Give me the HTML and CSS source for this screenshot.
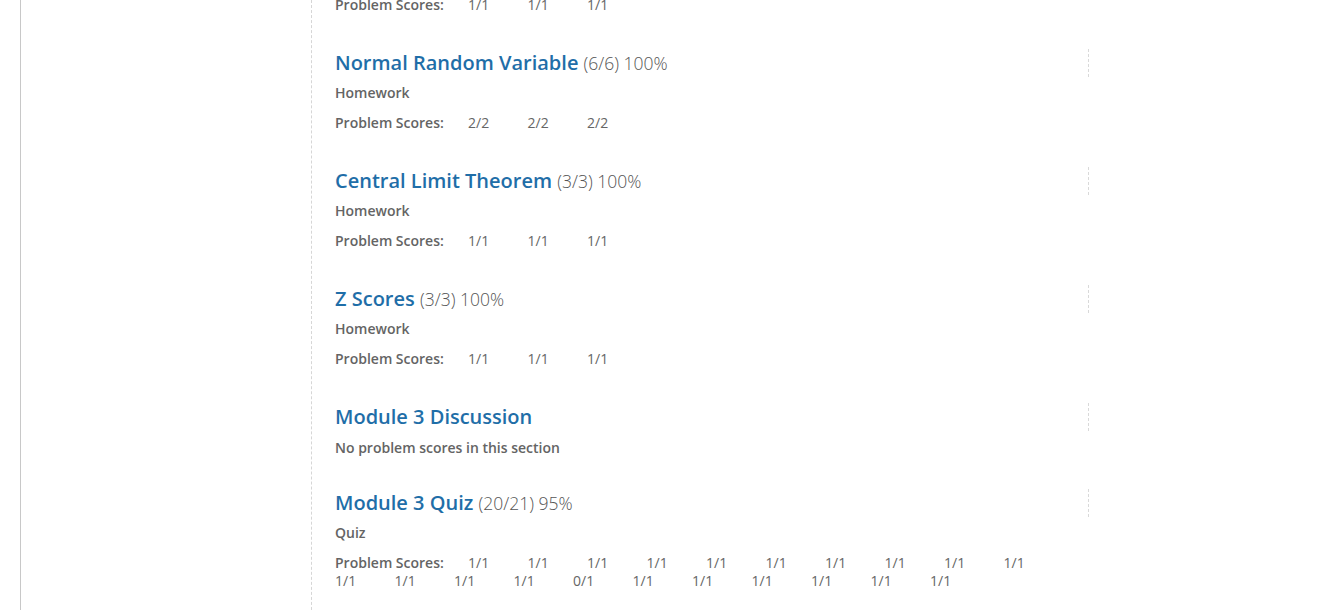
FILE: index.html
```html
<!DOCTYPE html>
<html>
<head>
<meta charset="utf-8">
<link rel="stylesheet" href="styles.css">
</head>
<body>
<div class="page">
  <div class="sidebar"></div>
  <div class="main">
    <section class="section partial">
      <div class="scores"><span class="label">Problem Scores:</span><ol class="list"><li>1/1</li><li>1/1</li><li>1/1</li></ol></div>
    </section>

    <section class="section">
      <div class="head"><h3 class="title"><a class="link">Normal Random Variable</a> <span class="pct">(6/6) 100%</span></h3></div>
      <p class="type">Homework</p>
      <div class="scores"><span class="label">Problem Scores:</span><ol class="list"><li>2/2</li><li>2/2</li><li>2/2</li></ol></div>
    </section>

    <section class="section">
      <div class="head"><h3 class="title"><a class="link">Central Limit Theorem</a> <span class="pct">(3/3) 100%</span></h3></div>
      <p class="type">Homework</p>
      <div class="scores"><span class="label">Problem Scores:</span><ol class="list"><li>1/1</li><li>1/1</li><li>1/1</li></ol></div>
    </section>

    <section class="section">
      <div class="head"><h3 class="title"><a class="link">Z Scores</a> <span class="pct">(3/3) 100%</span></h3></div>
      <p class="type">Homework</p>
      <div class="scores"><span class="label">Problem Scores:</span><ol class="list"><li>1/1</li><li>1/1</li><li>1/1</li></ol></div>
    </section>

    <section class="section">
      <div class="head"><h3 class="title"><a class="link">Module 3 Discussion</a></h3></div>
      <p class="type empty">No problem scores in this section</p>
    </section>

    <section class="section">
      <div class="head"><h3 class="title"><a class="link">Module 3 Quiz</a> <span class="pct">(20/21) 95%</span></h3></div>
      <p class="type">Quiz</p>
      <div class="scores"><span class="label">Problem Scores:</span><ol class="list"><li>1/1</li><li>1/1</li><li>1/1</li><li>1/1</li><li>1/1</li><li>1/1</li><li>1/1</li><li>1/1</li><li>1/1</li><li>1/1</li><li>1/1</li><li>1/1</li><li>1/1</li><li>1/1</li><li>0/1</li><li>1/1</li><li>1/1</li><li>1/1</li><li>1/1</li><li>1/1</li><li>1/1</li></ol></div>
    </section>
  </div>
</div>
</body>
</html>
```

FILE: styles.css
```css
html, body {
  margin: 0;
  padding: 0;
  background: #fff;
  height: 100%;
  overflow: hidden;
}

body {
  font-family: "Open Sans", "DejaVu Sans", sans-serif;
  color: #555;
}

.page {
  display: flex;
  min-height: 610px;
  padding-left: 20px;
}

.sidebar {
  width: 290px;
  border-left: 1px solid #c8c8c8;
  flex: none;
}

.main {
  flex: none;
  width: 1000px;
  border-left: 1px dashed #d6d6d6;
  padding-left: 23px;
}

.section {
  margin: 0;
}

.partial {
  margin-top: -4px;
}

.partial .scores {
  margin-top: 0;
}

.head {
  width: 753px;
  height: 28px;
  border-right: 1px dashed #d9d9d9;
  display: flex;
  align-items: center;
}

.title {
  margin: 0;
  font-size: 20px;
  font-weight: 600;
  line-height: 28px;
  white-space: nowrap;
}

.link {
  color: #1f6ea8;
  text-decoration: none;
}

.pct {
  font-size: 17.5px;
  font-weight: 300;
  color: #555;
}

.type {
  margin: 6px 0 0;
  font-size: 14px;
  font-weight: 600;
  line-height: 20px;
  color: #646464;
}

.type.empty {
  margin: 7px 0 31px;
}

.scores {
  margin: 11px 0 35px;
  width: 754px;
  font-size: 14px;
  line-height: 18px;
  color: #646464;
}

.label {
  display: inline-block;
  width: 133px;
  font-size: 14px;
  font-weight: 600;
  color: #646464;
}

.list {
  display: inline;
  margin: 0;
  padding: 0;
  list-style: none;
}

.list li {
  display: inline-block;
  width: 59.5px;
  color: #666;
  font-weight: 400;
}
```
